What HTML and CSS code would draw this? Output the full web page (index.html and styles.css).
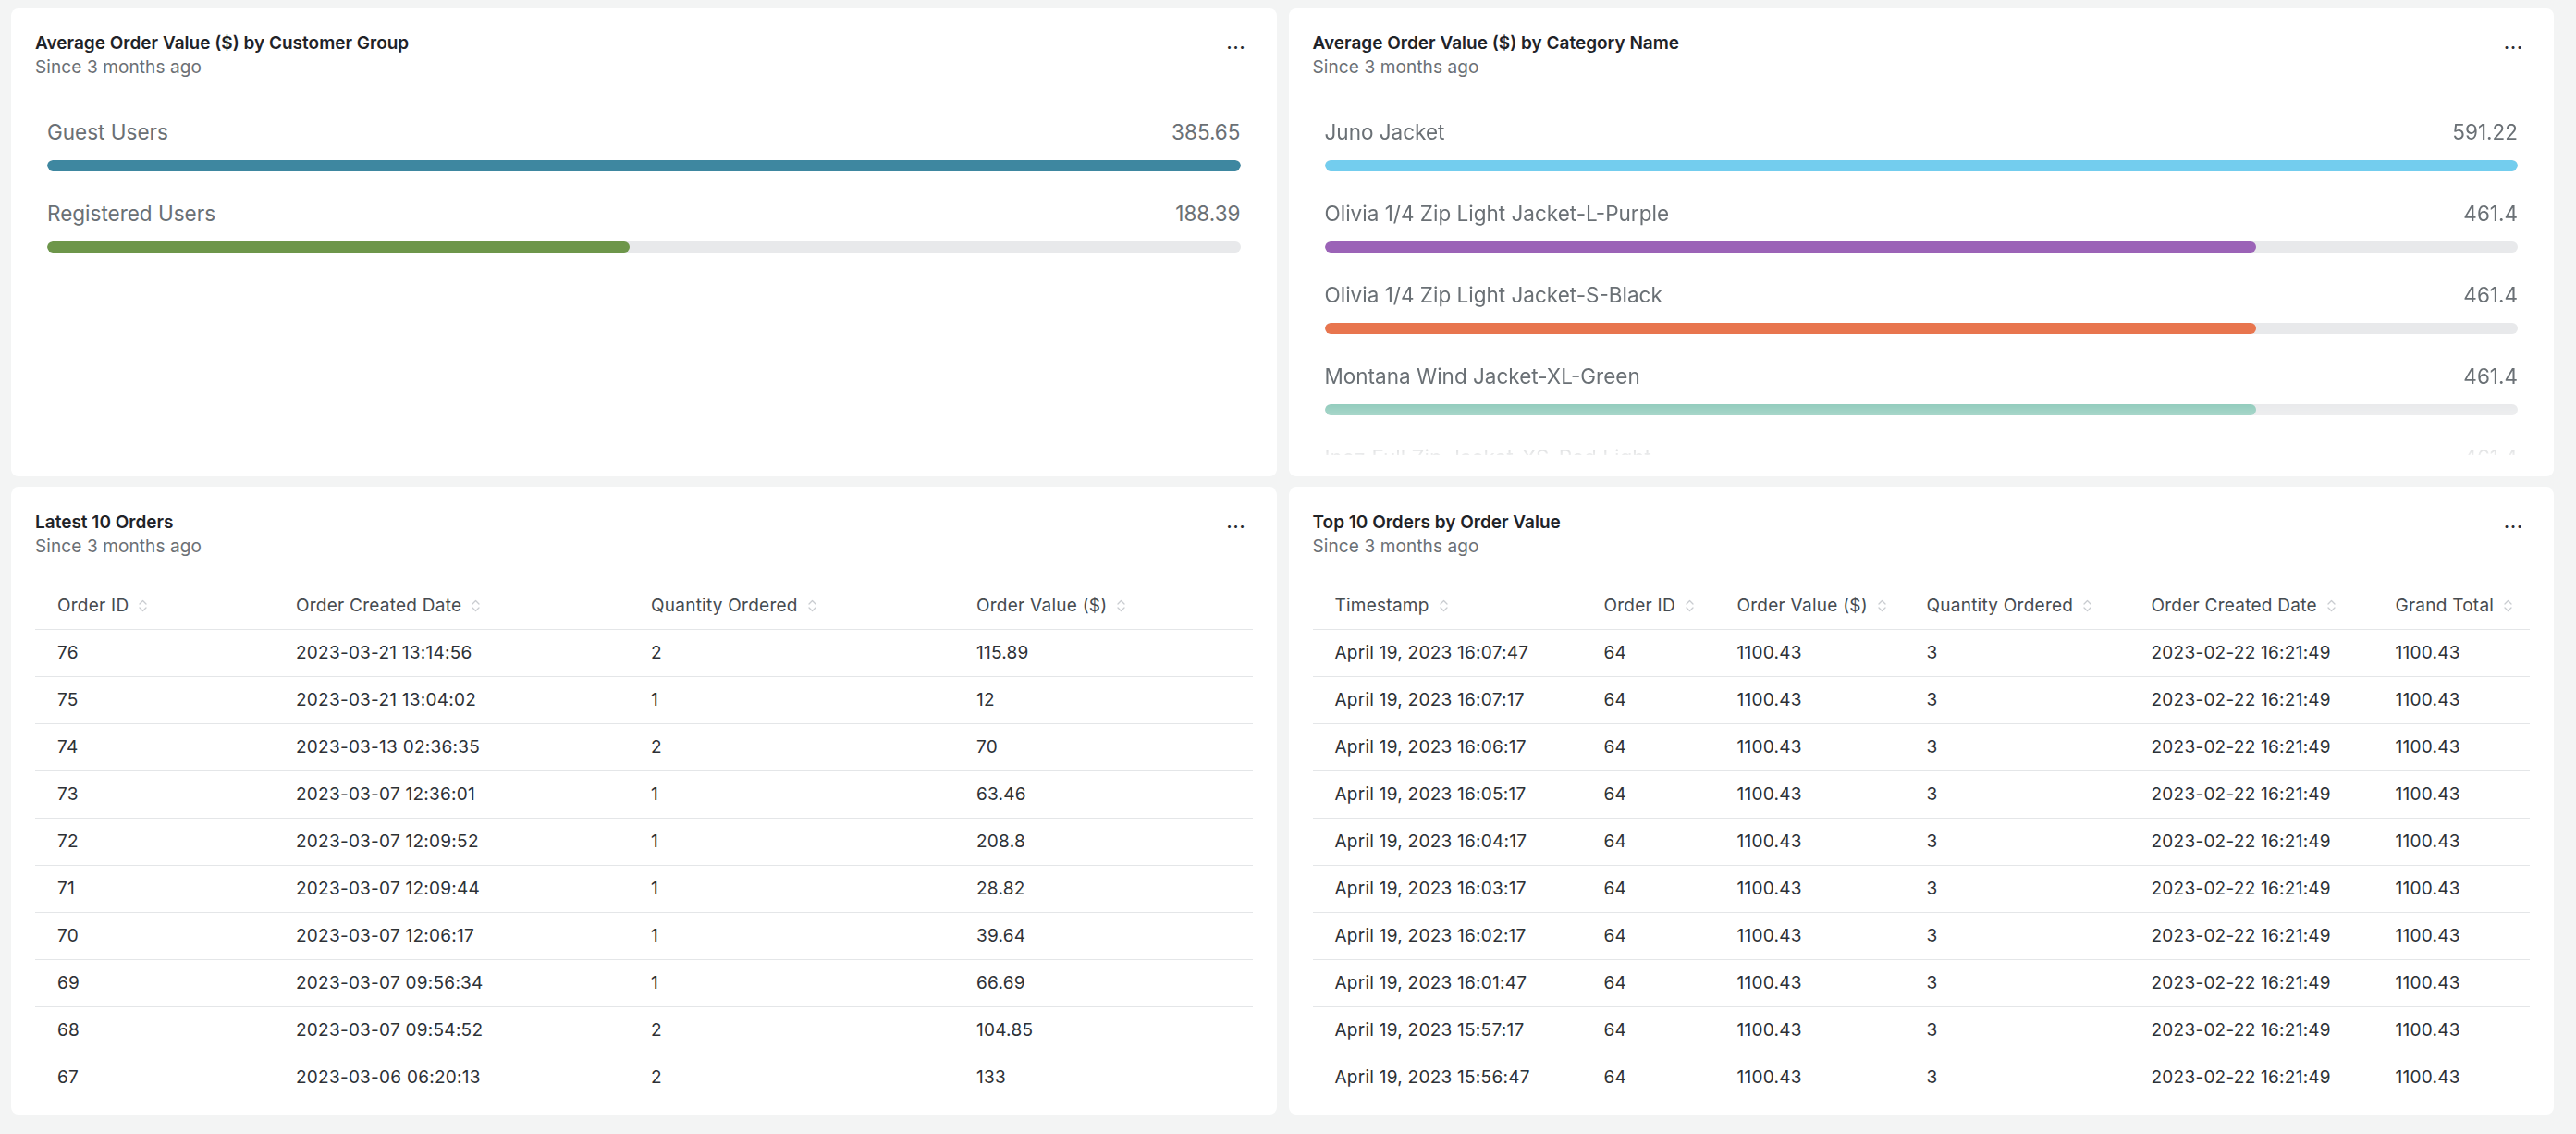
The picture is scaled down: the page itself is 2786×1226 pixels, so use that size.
FILE: index.html
```html
<!DOCTYPE html>
<html lang="en">
<head>
<meta charset="utf-8">
<title>Dashboard</title>
<link rel="stylesheet" href="styles.css">
</head>
<body>
<div class="grid">
  <section class="card card-top">
    <div class="card-head">
      <div class="titles">
        <div class="title">Average Order Value ($) by Customer Group</div>
        <div class="sub">Since 3 months ago</div>
      </div>
      <span class="more">...</span>
    </div>
    <div class="bars">
      <div class="bar-row">
        <div class="bar-top"><span>Guest Users</span><span>385.65</span></div>
        <div class="track"><div class="fill c-teal" style="width:100%"></div></div>
      </div>
      <div class="bar-row">
        <div class="bar-top"><span>Registered Users</span><span>188.39</span></div>
        <div class="track"><div class="fill c-green" style="width:48.85%"></div></div>
      </div>
    </div>
  </section>

  <section class="card card-top">
    <div class="card-head">
      <div class="titles">
        <div class="title">Average Order Value ($) by Category Name</div>
        <div class="sub">Since 3 months ago</div>
      </div>
      <span class="more">...</span>
    </div>
    <div class="bars bars-fade">
      <div class="bar-row">
        <div class="bar-top"><span>Juno Jacket</span><span>591.22</span></div>
        <div class="track"><div class="fill c-sky" style="width:100%"></div></div>
      </div>
      <div class="bar-row">
        <div class="bar-top"><span>Olivia 1/4 Zip Light Jacket-L-Purple</span><span>461.4</span></div>
        <div class="track"><div class="fill c-purple" style="width:78.04%"></div></div>
      </div>
      <div class="bar-row">
        <div class="bar-top"><span>Olivia 1/4 Zip Light Jacket-S-Black</span><span>461.4</span></div>
        <div class="track"><div class="fill c-orange" style="width:78.04%"></div></div>
      </div>
      <div class="bar-row">
        <div class="bar-top"><span>Montana Wind Jacket-XL-Green</span><span>461.4</span></div>
        <div class="track"><div class="fill c-mint" style="width:78.04%"></div></div>
      </div>
      <div class="bar-row bar-row-cut">
        <div class="bar-top"><span>Inez Full Zip Jacket-XS-Red Light</span><span>461.4</span></div>
        <div class="track"><div class="fill c-blue" style="width:78.04%"></div></div>
      </div>
    </div>
  </section>

  <section class="card">
    <div class="card-head">
      <div class="titles">
        <div class="title">Latest 10 Orders</div>
        <div class="sub">Since 3 months ago</div>
      </div>
      <span class="more">...</span>
    </div>
    <table class="tbl">
      <colgroup>
        <col class="w258"><col class="w384"><col class="w352"><col>
      </colgroup>
      <thead>
        <tr>
          <th><span class="th-in">Order ID<svg class="sort" viewBox="0 0 10 16"><path d="M1.5 6 L5 2.5 L8.5 6 M1.5 10 L5 13.5 L8.5 10"/></svg></span></th>
          <th><span class="th-in">Order Created Date<svg class="sort" viewBox="0 0 10 16"><path d="M1.5 6 L5 2.5 L8.5 6 M1.5 10 L5 13.5 L8.5 10"/></svg></span></th>
          <th><span class="th-in">Quantity Ordered<svg class="sort" viewBox="0 0 10 16"><path d="M1.5 6 L5 2.5 L8.5 6 M1.5 10 L5 13.5 L8.5 10"/></svg></span></th>
          <th><span class="th-in">Order Value ($)<svg class="sort" viewBox="0 0 10 16"><path d="M1.5 6 L5 2.5 L8.5 6 M1.5 10 L5 13.5 L8.5 10"/></svg></span></th>
        </tr>
      </thead>
      <tbody>
        <tr><td>76</td><td>2023-03-21 13:14:56</td><td>2</td><td>115.89</td></tr>
        <tr><td>75</td><td>2023-03-21 13:04:02</td><td>1</td><td>12</td></tr>
        <tr><td>74</td><td>2023-03-13 02:36:35</td><td>2</td><td>70</td></tr>
        <tr><td>73</td><td>2023-03-07 12:36:01</td><td>1</td><td>63.46</td></tr>
        <tr><td>72</td><td>2023-03-07 12:09:52</td><td>1</td><td>208.8</td></tr>
        <tr><td>71</td><td>2023-03-07 12:09:44</td><td>1</td><td>28.82</td></tr>
        <tr><td>70</td><td>2023-03-07 12:06:17</td><td>1</td><td>39.64</td></tr>
        <tr><td>69</td><td>2023-03-07 09:56:34</td><td>1</td><td>66.69</td></tr>
        <tr><td>68</td><td>2023-03-07 09:54:52</td><td>2</td><td>104.85</td></tr>
        <tr><td>67</td><td>2023-03-06 06:20:13</td><td>2</td><td>133</td></tr>
      </tbody>
    </table>
  </section>

  <section class="card">
    <div class="card-head">
      <div class="titles">
        <div class="title">Top 10 Orders by Order Value</div>
        <div class="sub">Since 3 months ago</div>
      </div>
      <span class="more">...</span>
    </div>
    <table class="tbl">
      <colgroup>
        <col class="w291"><col class="w144"><col class="w205"><col class="w243"><col class="w264"><col>
      </colgroup>
      <thead>
        <tr>
          <th><span class="th-in">Timestamp<svg class="sort" viewBox="0 0 10 16"><path d="M1.5 6 L5 2.5 L8.5 6 M1.5 10 L5 13.5 L8.5 10"/></svg></span></th>
          <th><span class="th-in">Order ID<svg class="sort" viewBox="0 0 10 16"><path d="M1.5 6 L5 2.5 L8.5 6 M1.5 10 L5 13.5 L8.5 10"/></svg></span></th>
          <th><span class="th-in">Order Value ($)<svg class="sort" viewBox="0 0 10 16"><path d="M1.5 6 L5 2.5 L8.5 6 M1.5 10 L5 13.5 L8.5 10"/></svg></span></th>
          <th><span class="th-in">Quantity Ordered<svg class="sort" viewBox="0 0 10 16"><path d="M1.5 6 L5 2.5 L8.5 6 M1.5 10 L5 13.5 L8.5 10"/></svg></span></th>
          <th><span class="th-in">Order Created Date<svg class="sort" viewBox="0 0 10 16"><path d="M1.5 6 L5 2.5 L8.5 6 M1.5 10 L5 13.5 L8.5 10"/></svg></span></th>
          <th><span class="th-in">Grand Total<svg class="sort" viewBox="0 0 10 16"><path d="M1.5 6 L5 2.5 L8.5 6 M1.5 10 L5 13.5 L8.5 10"/></svg></span></th>
        </tr>
      </thead>
      <tbody>
        <tr><td>April 19, 2023 16:07:47</td><td>64</td><td>1100.43</td><td>3</td><td>2023-02-22 16:21:49</td><td>1100.43</td></tr>
        <tr><td>April 19, 2023 16:07:17</td><td>64</td><td>1100.43</td><td>3</td><td>2023-02-22 16:21:49</td><td>1100.43</td></tr>
        <tr><td>April 19, 2023 16:06:17</td><td>64</td><td>1100.43</td><td>3</td><td>2023-02-22 16:21:49</td><td>1100.43</td></tr>
        <tr><td>April 19, 2023 16:05:17</td><td>64</td><td>1100.43</td><td>3</td><td>2023-02-22 16:21:49</td><td>1100.43</td></tr>
        <tr><td>April 19, 2023 16:04:17</td><td>64</td><td>1100.43</td><td>3</td><td>2023-02-22 16:21:49</td><td>1100.43</td></tr>
        <tr><td>April 19, 2023 16:03:17</td><td>64</td><td>1100.43</td><td>3</td><td>2023-02-22 16:21:49</td><td>1100.43</td></tr>
        <tr><td>April 19, 2023 16:02:17</td><td>64</td><td>1100.43</td><td>3</td><td>2023-02-22 16:21:49</td><td>1100.43</td></tr>
        <tr><td>April 19, 2023 16:01:47</td><td>64</td><td>1100.43</td><td>3</td><td>2023-02-22 16:21:49</td><td>1100.43</td></tr>
        <tr><td>April 19, 2023 15:57:17</td><td>64</td><td>1100.43</td><td>3</td><td>2023-02-22 16:21:49</td><td>1100.43</td></tr>
        <tr><td>April 19, 2023 15:56:47</td><td>64</td><td>1100.43</td><td>3</td><td>2023-02-22 16:21:49</td><td>1100.43</td></tr>
      </tbody>
    </table>
  </section>
</div>
</body>
</html>
```

FILE: styles.css
```css
* { box-sizing: border-box; }
html, body {
  margin: 0;
  padding: 0;
  background: #f3f4f4;
  font-family: Inter, "Noto Sans", "Liberation Sans", sans-serif;
}
.grid {
  display: grid;
  grid-template-columns: 1fr 1fr;
  grid-template-rows: 506px auto;
  column-gap: 13px;
  row-gap: 12px;
  padding: 9px 24px 20px 12px;
}
.card {
  background: #ffffff;
  border-radius: 8px;
  padding: 26px 26px 15px 26px;
  overflow: hidden;
}
.card-top {
  padding-bottom: 23px;
  display: flex;
  flex-direction: column;
}
.card-head {
  display: flex;
  justify-content: space-between;
  align-items: flex-start;
}
.title {
  font-size: 19px;
  line-height: 24px;
  font-weight: 600;
  color: #1f2328;
}
.sub {
  font-size: 19px;
  line-height: 28px;
  letter-spacing: 0.1px;
  color: #6b7075;
}
.more {
  font-size: 18px;
  line-height: 24px;
  font-weight: 700;
  color: #2a2e33;
  letter-spacing: 1px;
  margin-right: 7px;
}
.bars {
  margin-top: 41px;
  padding: 0 13px;
  flex: 1;
  overflow: hidden;
}
.bars-fade {
  -webkit-mask-image: linear-gradient(to bottom, #000 calc(100% - 58px), rgba(0,0,0,0.12) 100%);
  mask-image: linear-gradient(to bottom, #000 calc(100% - 58px), rgba(0,0,0,0.12) 100%);
}
.bar-row {
  height: 88px;
}
.bar-top {
  display: flex;
  justify-content: space-between;
  font-size: 22.5px;
  line-height: 30px;
  color: #6a7075;
}
.track {
  margin-top: 15px;
  height: 12px;
  border-radius: 6px;
  background: #e8e9eb;
  overflow: hidden;
}
.fill {
  height: 100%;
  border-radius: 6px;
}
.c-teal { background: #3e87a0; }
.c-green { background: #6d964a; }
.c-sky { background: #73cdee; }
.c-purple { background: #9b63b7; }
.c-orange { background: #e8754e; }
.c-mint { background: #8ecaba; }
.c-blue { background: #5b7fc7; }

.tbl {
  width: 100%;
  margin-top: 25px;
  border-collapse: collapse;
  table-layout: fixed;
}
.tbl th, .tbl td {
  text-align: left;
  font-size: 19px;
  letter-spacing: 0.25px;
  line-height: 24px;
  padding: 13px 24px 13px 24px;
  border-bottom: 1px solid #e4e6e8;
  white-space: nowrap;
}
.tbl th {
  font-weight: 400;
  color: #464b50;
}
.tbl td {
  color: #2d3136;
}
.tbl tbody tr:last-child td {
  border-bottom: none;
}
.th-in {
  display: inline-flex;
  align-items: center;
  gap: 10px;
}
.sort {
  width: 11px;
  height: 16px;
  fill: none;
  stroke: #c9ccd0;
  stroke-width: 1.3;
  stroke-linecap: round;
  stroke-linejoin: round;
}
.w258 { width: 258px; }
.w384 { width: 384px; }
.w352 { width: 352px; }
.w291 { width: 291px; }
.w144 { width: 144px; }
.w205 { width: 205px; }
.w243 { width: 243px; }
.w264 { width: 264px; }
```
